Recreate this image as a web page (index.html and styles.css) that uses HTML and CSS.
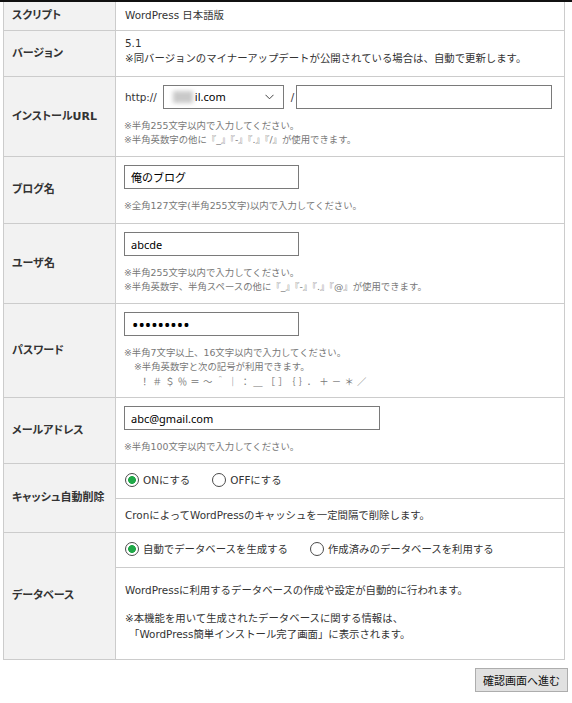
FILE: index.html
```html
<!DOCTYPE html>
<html lang="ja">
<head>
<meta charset="utf-8">
<title>WordPress インストール</title>
<link rel="stylesheet" href="styles.css">
</head>
<body>
<div class="topline"></div>
<div class="form">
  <div class="row row-script">
    <div class="label">スクリプト</div>
    <div class="value">WordPress 日本語版</div>
  </div>
  <div class="row row-version">
    <div class="label">バージョン</div>
    <div class="value">
      <div>5.1</div>
      <div>※同バージョンのマイナーアップデートが公開されている場合は、自動で更新します。</div>
    </div>
  </div>
  <div class="row">
    <div class="label">インストールURL</div>
    <div class="value">
      <div class="url-line">
        <span class="scheme">http://</span>
        <div class="select">
          <span class="blur"></span><span class="domain">il.com</span>
          <svg class="chev" width="9" height="6" viewBox="0 0 9 6"><path d="M0.5 0.8 L4.5 4.8 L8.5 0.8" fill="none" stroke="#444" stroke-width="1"/></svg>
        </div>
        <span class="slash">/</span>
        <input class="input wide" type="text" value="">
      </div>
      <div class="note">
        <div>※半角255文字以内で入力してください。</div>
        <div>※半角英数字の他に『_』『-』『.』『/』が使用できます。</div>
      </div>
    </div>
  </div>
  <div class="row row-blog">
    <div class="label">ブログ名</div>
    <div class="value">
      <input class="input" type="text" value="俺のブログ">
      <div class="note">
        <div>※全角127文字(半角255文字)以内で入力してください。</div>
      </div>
    </div>
  </div>
  <div class="row">
    <div class="label">ユーザ名</div>
    <div class="value">
      <input class="input" type="text" value="abcde">
      <div class="note">
        <div>※半角255文字以内で入力してください。</div>
        <div>※半角英数字、半角スペースの他に『_』『-』『.』『@』が使用できます。</div>
      </div>
    </div>
  </div>
  <div class="row">
    <div class="label">パスワード</div>
    <div class="value">
      <input class="input pw" type="password" value="abcdefghi">
      <div class="note">
        <div>※半角7文字以上、16文字以内で入力してください。</div>
        <div class="indent1">※半角英数字と次の記号が利用できます。</div>
        <div class="symbols">！＃＄％＝～＾｜：＿［］｛｝．＋－＊／</div>
      </div>
    </div>
  </div>
  <div class="row">
    <div class="label">メールアドレス</div>
    <div class="value">
      <input class="input wide" type="text" value="abc@gmail.com">
      <div class="note">
        <div>※半角100文字以内で入力してください。</div>
      </div>
    </div>
  </div>
  <div class="row">
    <div class="label">キャッシュ自動削除</div>
    <div class="value split">
      <div class="radios">
        <label class="radio"><input type="radio" name="cache" checked>ONにする</label>
        <label class="radio"><input type="radio" name="cache">OFFにする</label>
      </div>
      <div class="sub-text">CronによってWordPressのキャッシュを一定間隔で削除します。</div>
    </div>
  </div>
  <div class="row">
    <div class="label">データベース</div>
    <div class="value split">
      <div class="radios">
        <label class="radio"><input type="radio" name="db" checked>自動でデータベースを生成する</label>
        <label class="radio"><input type="radio" name="db">作成済みのデータベースを利用する</label>
      </div>
      <div class="sub-db">
        <p>WordPressに利用するデータベースの作成や設定が自動的に行われます。</p>
        <p>※本機能を用いて生成されたデータベースに関する情報は、<br><span class="indent-q">「WordPress簡単インストール完了画面」に表示されます。</span></p>
      </div>
    </div>
  </div>
</div>
<div class="actions">
  <button class="btn" type="button">確認画面へ進む</button>
</div>
</body>
</html>
```
FILE: styles.css
```css
* { box-sizing: border-box; }
body {
  margin: 0;
  background: #fff;
  font-family: "DejaVu Sans", "Noto Sans CJK JP", sans-serif;
  font-size: 10.4px;
  line-height: 14px;
  color: #333;
}
.topline { height: 2px; background: #111; }
.form {
  margin-left: 3px;
  width: 562px;
  border-left: 1px solid #ccc;
  border-right: 1px solid #ccc;
}
.row { display: flex; border-bottom: 1px solid #ccc; }
.label {
  width: 112px;
  flex: none;
  background: #f2f2f2;
  border-right: 1px solid #ccc;
  display: flex;
  align-items: center;
  padding-left: 8px;
  font-weight: bold;
  font-size: 11px;
  font-feature-settings: "palt";
  color: #333;
}
.value { flex: 1; padding: 8px 8px 9px 8px; }
.row-script .value { padding: 5px 9px 7px; line-height: 16px; }
.row-version .value { padding: 5px 9px 10px; line-height: 15px; }
.row-blog .value { padding-bottom: 10px; }

.input {
  display: block;
  width: 175px;
  height: 24px;
  border: 1px solid #7a7a7a;
  padding: 0 6px;
  font-family: "Noto Sans", "Noto Sans CJK JP", sans-serif;
  font-size: 11px;
  color: #000;
  background: #fff;
  outline: none;
}
.input.wide { width: 256px; }
.pw { font-size: 17px; padding-left: 7px; }

.url-line { display: flex; align-items: center; }
.scheme { margin: 0 6px 0 1px; }
.select {
  width: 121px;
  height: 24px;
  border: 1px solid #7a7a7a;
  display: flex;
  align-items: center;
  padding-left: 9px;
  font-family: "Noto Sans", sans-serif;
  font-size: 11px;
  color: #000;
}
.blur {
  width: 20px;
  height: 12px;
  background: #c9c9c9;
  filter: blur(2px);
  margin-right: 2px;
}
.chev { margin-left: auto; margin-right: 9px; }
.slash { margin: 0 2px 0 7px; }

.note { margin-top: 10px; font-size: 9.4px; color: #777; line-height: 14px; }
.indent1 { padding-left: 10px; }
.symbols { padding-left: 16px; letter-spacing: 3.2px; font-family: "Noto Sans CJK JP", sans-serif; }

.split { padding: 0; }
.radios { display: flex; padding: 9px 8px 11px 9px; line-height: 14px; }
.radio { display: inline-flex; align-items: center; margin-right: 22px; color: #333; }
.radio input {
  appearance: none;
  -webkit-appearance: none;
  width: 14px;
  height: 14px;
  margin: 0 4px 0 0;
  border: 1px solid #4a4a4a;
  border-radius: 50%;
  background: #fff;
}
.radio input:checked {
  background: radial-gradient(circle, #20a848 0, #20a848 3.6px, #fff 4.2px);
}
.sub-text { border-top: 1px solid #ccc; padding: 9px 9px 10px; }
.sub-db { border-top: 1px solid #ccc; padding: 14px 9px 17px; line-height: 16px; }
.sub-db p { margin: 0; }
.sub-db p + p { margin-top: 12px; }
.indent-q { padding-left: 4px; }

.actions { display: flex; justify-content: flex-end; padding: 8px 4px 0 0; }
.btn {
  height: 24px;
  padding: 0 7px;
  background: #e1e1e1;
  border: 1px solid #adadad;
  font-family: "Noto Sans CJK JP", sans-serif;
  font-size: 11px;
  color: #111;
}
```
